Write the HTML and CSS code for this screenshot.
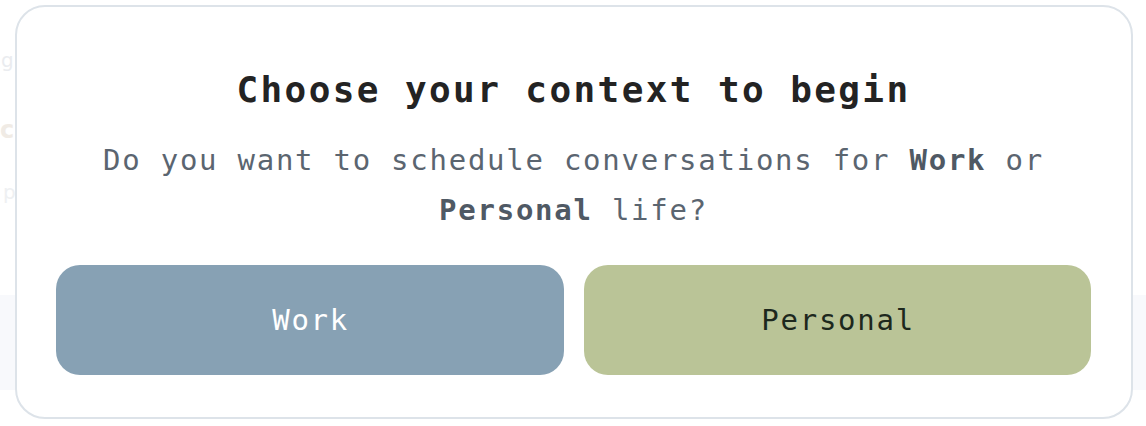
FILE: index.html
```html
<!DOCTYPE html>
<html lang="en">
<head>
<meta charset="utf-8">
<title>Choose your context</title>
<link rel="stylesheet" href="styles.css">
</head>
<body>
<div class="page">
  <div class="scene" aria-hidden="true">
    <div class="scene-side">
      <span class="ghost ghost-a">g</span>
      <span class="ghost ghost-b">c</span>
      <span class="ghost ghost-c">p</span>
    </div>
    <div class="scene-band"></div>
  </div>
  <div class="modal" role="dialog" aria-labelledby="ctx-title">
    <h1 class="modal-title" id="ctx-title">Choose your context to begin</h1>
    <p class="modal-text">Do you want to schedule conversations for <strong>Work</strong> or <strong>Personal</strong> life?</p>
    <div class="choices">
      <button class="choice choice-work" type="button">Work</button>
      <button class="choice choice-personal" type="button">Personal</button>
    </div>
  </div>
</div>
</body>
</html>
```

FILE: styles.css
```css
* { box-sizing: border-box; }

html, body {
  margin: 0;
  padding: 0;
  background: #ffffff;
}

body {
  width: 1146px;
  height: 426px;
  overflow: hidden;
  font-family: "DejaVu Sans Mono", "Liberation Mono", monospace;
}

.page {
  position: relative;
  width: 1146px;
  height: 426px;
}

.scene {
  display: flex;
  flex-direction: column;
  height: 426px;
}

.scene-side {
  display: flex;
  flex-direction: column;
  align-items: flex-start;
  width: 15px;
  padding-top: 50px;
  height: 295px;
}

.ghost {
  display: block;
  font-family: "DejaVu Sans", sans-serif;
  line-height: 1;
}

.ghost-a {
  font-size: 20px;
  color: #eaecef;
  margin-left: 1px;
}

.ghost-b {
  margin-top: 48px;
  font-size: 24px;
  font-weight: bold;
  color: #f0ebe5;
  margin-left: 0;
}

.ghost-c {
  margin-top: 40px;
  font-size: 20px;
  color: #eef0f2;
  margin-left: 3px;
}

.scene-band {
  height: 95px;
  background: #f8f9fc;
}

.modal {
  position: absolute;
  top: 5px;
  left: 15px;
  width: 1118px;
  height: 414px;
  background: #ffffff;
  border: 2px solid #dde3e9;
  border-radius: 30px;
  padding: 61px 40px 42px 39px;
  display: flex;
  flex-direction: column;
  align-items: stretch;
}

.modal-title {
  margin: 0;
  text-align: center;
  font-size: 36px;
  line-height: 44px;
  font-weight: bold;
  letter-spacing: 2.4px;
  color: #232323;
}

.modal-text {
  margin: 23px 0 0;
  text-align: center;
  font-size: 29px;
  line-height: 50px;
  letter-spacing: 1.74px;
  color: #5b6570;
}

.modal-text strong {
  font-weight: bold;
  color: #4f5964;
}

.choices {
  margin-top: auto;
  display: flex;
  gap: 20px;
}

.choice {
  flex: 1 1 0;
  height: 110px;
  border: 0;
  border-radius: 24px;
  font-family: "DejaVu Sans Mono", "Liberation Mono", monospace;
  font-size: 29px;
  letter-spacing: 1.74px;
  padding: 0 0 0 1.74px;
  cursor: pointer;
}

.choice-work {
  background: #87a1b4;
  color: #ffffff;
}

.choice-personal {
  background: #bac497;
  color: #1d281d;
}
```
